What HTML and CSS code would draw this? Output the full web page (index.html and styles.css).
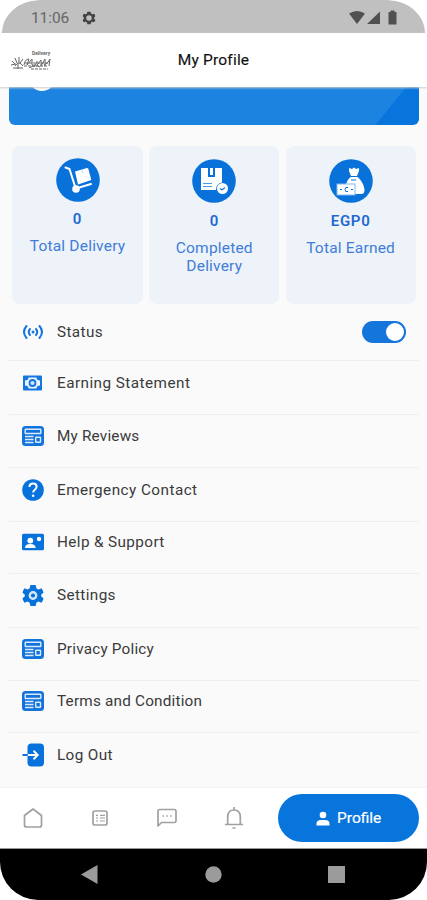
FILE: index.html
```html
<!DOCTYPE html>
<html lang="en">
<head>
<meta charset="utf-8">
<title>My Profile</title>
<link rel="stylesheet" href="styles.css">
</head>
<body>
<svg class="defs" width="0" height="0" aria-hidden="true">
  <symbol id="gear" viewBox="0 0 24 24"><path fill-rule="evenodd" d="M9 0h6l.8 3.8 2.2 1.3 3.700-1.200 2.600 4.600L21.400 11v2l2.900 2.500-2.600 4.600-3.700-1.200-2.200 1.300L15 24H9l-.8-3.800L6 18.900l-3.700 1.200-2.600-4.600L2.600 13v-2L-.3 8.500 2.300 3.900 6 5.100l2.200-1.300zM12 7a5 5 0 1 0 0 10a5 5 0 1 0 0-10z"/></symbol>
  <symbol id="news" viewBox="0 0 22 20"><rect width="22" height="20" rx="3.500" fill="#1273dd"/><g fill="none" stroke="#dcebfc" stroke-width="1.400"><rect x="3.200" y="3.200" width="15.600" height="4.300" rx=".5"/><path d="M3 10.500h8.500M3 13.500h8.500M3 16.500h8.500"/><rect x="13.700" y="11.200" width="4.800" height="5" rx=".5"/></g></symbol>
</svg>
<div class="phone">
  <div class="status-bar">
    <span class="clock">11:06</span>
    <svg class="sb-gear" width="14" height="14" viewBox="-1 -1 26 26"><use href="#gear" width="24" height="24"/></svg>
    <svg class="signals" width="50" height="16" viewBox="0 0 50 16"><path d="M0 3.500Q8-1.500 16 3.500L8 14zM18 14L31 1.500V14zM39.500 2h2V.5h4V2h2v12.500h-8z"/></svg>
  </div>
  <header class="app-bar">
    <div class="brand">
      <span class="brand-top">Delivery</span>
      <svg width="41" height="14" viewBox="0 0 41 14"><g fill="none" stroke="#666" stroke-width="1"><path d="M1 5l3 3M4 2l2 5M8 1v6M12 3L9 7M0 9l5-1M2 12h10M4 10q4-6 8 0M7 8v5"/><path d="M13 9q1-6 5-6l-2 6 5-6v6q5 1 5-4M18 12q7-4 11-1M26 9l4-5v6l4-7v7M33 9q4-1 6-6l-1 7"/><path d="M14 7h24M20 13h17M13 10h24" stroke-dasharray="3 1"/></g></svg>
    </div>
    <h1>My Profile</h1>
  </header>
  <main>
    <section class="banner"><span class="avatar"></span></section>
    <section class="stats">
      <article class="card first">
        <svg width="44" height="44" viewBox="0 0 44 44"><circle cx="22" cy="22" r="21.800" fill="#0872da"/><g fill="none" stroke="#fff" stroke-width="2" stroke-linecap="round" stroke-linejoin="round"><path d="M9.500 9.500l4 1.500 6 19M20 30.500l15-4.500"/></g><path d="M19 13.500L31 10q1 0 1.300.8l3 11.200-13.300 4.500z" fill="#fff"/><path d="M26 12l1 3" stroke="#b9d7f6"/><circle cx="20" cy="31" r="3.800" fill="#fff"/></svg>
        <strong>0</strong><p>Total Delivery</p>
      </article>
      <article class="card">
        <svg width="44" height="44" viewBox="0 0 44 44"><circle cx="22" cy="22" r="21.800" fill="#0872da"/><path d="M9 9h7v9h7V9h7v14.500a7 7 0 0 0-6 7.500H9zM18 9h3v7h-3z" fill="#fff"/><path d="M11 24.500h9M11 27.500h9" stroke="#4c98e6" stroke-width="1.200"/><circle cx="30.500" cy="29.500" r="5.500" fill="#fff"/><path d="M28 29.500l2 1.200 3-2" fill="none" stroke="#0872da" stroke-width="1.200"/></svg>
        <strong>0</strong><p>Completed<br>Delivery</p>
      </article>
      <article class="card">
        <svg width="44" height="44" viewBox="0 0 44 44"><circle cx="22" cy="22" r="21.800" fill="#0872da"/><path d="M20 9l3 1 2-1.500L27 10l3-1v3l-2 5h-6l-2-5zM21.500 18h7c4 3 7 9 7 13q0 4-3 4H17V25q1-4 4.500-7z" fill="#fff"/><path d="M22 21h5" stroke="#0872da"/><rect x="8" y="25" width="18" height="11" fill="#fff" stroke="#82b8ef" stroke-width="1"/><path d="M11 30.500h2M22 30.500h2M19 28.500q-3-1-3 2t3 2" fill="none" stroke="#0872da"/></svg>
        <strong>EGP0</strong><p>Total Earned</p>
      </article>
    </section>
    <ul class="menu">
      <li class="r-status"><svg width="20" height="18" viewBox="1 0 20 18"><g fill="none" stroke="#1676df" stroke-width="2" stroke-linecap="round"><path d="M4.500 3q-5 6 0 12M17.500 3q5 6 0 12M8 6q-2.500 3 0 6M14 6q2.500 3 0 6"/></g><circle cx="11" cy="9" r="1.500" fill="#1676df"/></svg><span>Status</span><i class="toggle"></i></li>
      <li class="r-earning"><svg width="22" height="18" viewBox="0 0 22 18"><rect x="1" y="1.500" width="19" height="15" rx="1" fill="#1676df"/><path d="M6.500 3.500h8q0 3 3.500 3v5q-3.500 0-3.500 3h-8q0-3-3.500-3v-5q3.500 0 3.500-3z" fill="#edf5fe"/><circle cx="10.500" cy="9" r="3" fill="#cfe3fb" stroke="#1676df" stroke-width="1.800"/></svg><span>Earning Statement</span></li>
      <li class="r-reviews"><svg width="22" height="20"><use href="#news"/></svg><span>My Reviews</span></li>
      <li class="r-contact"><svg width="22" height="22" viewBox="0 0 22 22"><circle cx="11" cy="11" r="10.800" fill="#0872dc"/><path d="M7.400 8q.2-3.500 3.700-3.500t3.500 3.300q0 1.600-1.800 2.900-1.700 1.200-1.700 2.800" fill="none" stroke="#fff" stroke-width="2"/><circle cx="11.100" cy="16.800" r="1.300" fill="#fff"/></svg><span>Emergency Contact</span></li>
      <li class="r-help"><svg width="22" height="18" viewBox="0 0 22 18"><rect y=".7" width="22" height="16.600" rx="1.500" fill="#0872dc"/><g fill="#fff"><circle cx="8.300" cy="7.600" r="2.900"/><path d="M3 15q0-4 5.300-4t5.300 4z"/><circle cx="17" cy="6" r="2.200"/></g></svg><span>Help &amp; Support</span></li>
      <li class="r-settings"><svg width="22" height="23" viewBox="-.5 0 25 24" fill="#0872dc"><circle cx="12" cy="12" r="5.500" fill="#d4e6fc"/><use href="#gear" width="24" height="24"/><circle cx="12" cy="12" r="4.500" fill="#d4e6fc"/><circle cx="12" cy="12" r="2.300"/></svg><span>Settings</span></li>
      <li class="r-privacy"><svg width="22" height="20"><use href="#news"/></svg><span>Privacy Policy</span></li>
      <li class="r-terms"><svg width="22" height="20"><use href="#news"/></svg><span>Terms and Condition</span></li>
      <li class="r-logout"><svg width="22" height="24" viewBox="0 0 22 24"><rect x="5.500" y=".5" width="16.500" height="23" rx="4" fill="#0872dc"/><path d="M.5 12h5" stroke="#0872dc" stroke-width="2"/><path d="M6 12h10M11.500 7.800l4.200 4.200-4.200 4.200" fill="none" stroke="#fff" stroke-width="2"/></svg><span>Log Out</span></li>
    </ul>
  </main>
  <nav class="tabs">
    <svg width="22" height="24" viewBox="0 0 22 24"><path d="M2.500 9.500L11 3l8.500 6.500V19q0 2-2 2h-13q-2 0-2-2z"/></svg>
    <svg width="22" height="24" viewBox="0 0 22 24"><rect x="4" y="5" width="14" height="14" rx="2"/><path d="M7 9.300h2M11 9.300h5M7 12h2M11 12h5M7 15h2M11 15h5" stroke-width="1.200"/></svg>
    <svg width="22" height="24" viewBox="0 0 22 24"><path d="M2 20V5q0-1.500 1.500-1.500h15Q20 3.500 20 5v10q0 1.500-1.500 1.500h-13z"/><path d="M6.500 10H8M10.300 10h1.500M14 10h1.500"/></svg>
    <svg width="22" height="24" viewBox="0 0 22 24"><path d="M2 18.500h18M4.700 18V11q0-7 6.300-7t6.300 7v7M11 1v3M9.500 22h3"/></svg>
    <a class="profile"><svg width="14" height="15" viewBox="0 0 14 15"><circle cx="7" cy="4" r="3.300"/><path d="M.5 14.500v-2Q.5 9 5 9h4q4.500 0 4.500 3.500v2z"/></svg><span>Profile</span></a>
  </nav>
  <footer class="system-nav"><svg width="17" height="19" viewBox="0 0 17 19"><path d="M0 9.500L16.500 0v19z"/></svg><svg width="17" height="17"><circle cx="8.500" cy="8.500" r="8.200"/></svg><svg width="17" height="17"><rect width="17" height="17"/></svg></footer>
</div>
</body>
</html>
```

FILE: styles.css
```css
* { box-sizing: border-box; }
body { margin: 0; background: #fff; font-family: Roboto, "Liberation Sans", sans-serif; color: #3a3a3a; }
.defs { position: absolute; }
svg { display: block; flex: none; overflow: visible; }
.phone { width: 427px; height: 900px; overflow: hidden; display: flex; flex-direction: column; background: #fafafa; border-radius: 38px; }
.status-bar { height: 33px; flex: none; margin: 0 2px; border-radius: 38px 38px 0 0 / 33px 33px 0 0; background: #c0c0c0; display: flex; align-items: center; padding: 2px 26px 0 29px; }
.clock { font-size: 15.500px; letter-spacing: -.1px; color: #666; width: 51px; }
.sb-gear { fill: #444; }
.signals { margin-left: auto; fill: #505050; }
.app-bar { height: 54px; flex: none; background: #fff; display: grid; grid-template-columns: 90px 1fr 90px; align-items: center; box-shadow: 0 1px 2px #ccc; z-index: 1; }
.brand { padding-left: 11px; display: flex; flex-direction: column; }
.brand-top { font-size: 5px; line-height: 5px; font-weight: 700; color: #666; padding-left: 21px; }
h1 { margin: 0; font-size: 15.500px; line-height: 20px; font-weight: 450; color: #111; -webkit-text-stroke: .15px #111; text-align: center; letter-spacing: .2px; }
main { height: 700px; flex: none; padding: 0 8px 0 9px; }
.banner { height: 38px; border-radius: 0 0 6px 6px; overflow: hidden; background: linear-gradient(129deg, #1c84e0 0 90%, #0875dc 90.200%); }
.avatar { display: block; width: 26px; height: 26px; margin: -22px 0 0 20px; border-radius: 50%; background: #fff; }
.stats { display: grid; grid-template-columns: 131px 130px 130px; column-gap: 6.300px; padding: 21px 3px 0; }
.card { height: 158px; border-radius: 8px; background: #edf3f8; color: #1f69d2; display: flex; flex-direction: column; align-items: center; padding-top: 13px; }
.card strong { font-size: 15px; line-height: 18px; font-weight: 600; letter-spacing: .7px; margin-top: 9px; }
.card p { margin: 9px 0 0; color: #3f7dd9; font-size: 15.500px; line-height: 18px; letter-spacing: .2px; text-align: center; }
.card.first { padding-top: 12px; }
.card.first strong { margin-top: 8px; }
.menu { list-style: none; margin: 0; padding: 0; }
.menu li { display: flex; align-items: flex-start; height: 53px; border-bottom: 1px solid #eceff0; padding: 9px 13px 0; }
.menu li > span { font-size: 15.300px; line-height: 24px; margin-left: 13px; letter-spacing: .38px; }
.menu li > svg[height="18"] { margin-top: 3px; }
.menu li > svg[height="20"] { margin-top: 2px; }
.menu li > svg[height="22"] { margin-top: 1px; }
.menu li.r-status { height: 57px; padding-top: 16px; }
.menu li.r-status > svg { margin-left: 1px; margin-right: 1px; }
.menu li.r-earning { height: 54px; padding-top: 10px; }
.menu li.r-earning > span { letter-spacing: .45px; }
.menu li.r-contact { height: 54px; padding-top: 10px; }
.menu li.r-contact > span { letter-spacing: .45px; }
.menu li.r-help { height: 52px; padding-top: 8px; }
.menu li.r-settings { height: 54px; }
.menu li.r-settings > svg { margin-top: 1px; }
.menu li.r-reviews > span, .menu li.r-privacy > span, .menu li.r-terms > span { letter-spacing: .2px; }
.menu li.r-terms { height: 52px; padding-top: 8px; }
.menu li.r-logout { height: 54px; padding-top: 10px; border: 0; }
.toggle { width: 44px; height: 22px; margin: 1px 0 0 auto; border-radius: 11px; background: #1475da; padding: 2px; display: flex; justify-content: flex-end; }
.toggle::after { content: ""; width: 18px; height: 18px; border-radius: 50%; background: #fff; }
.tabs { height: 62px; flex: none; background: #fff; border-top: 1px solid #f2f2f2; border-bottom: 1px solid #999; display: flex; align-items: center; gap: 45.300px; padding: 0 8px 0 21.500px; }
.tabs > svg { fill: none; stroke: #a0a0a0; stroke-width: 1.700; stroke-linejoin: round; }
.profile { width: 141px; height: 48px; margin-left: -12.500px; border-radius: 24px; background: #0875dc; color: #fff; display: flex; align-items: center; justify-content: center; gap: 7px; flex: none; font-size: 15.500px; -webkit-text-stroke: .2px #fff; }
.profile svg { fill: #fff; }
.system-nav { height: 51px; flex: none; background: #000; display: flex; align-items: center; justify-content: space-between; padding: 0 82px 0 81px; }
.system-nav svg { fill: #9b9b9b; }
```
